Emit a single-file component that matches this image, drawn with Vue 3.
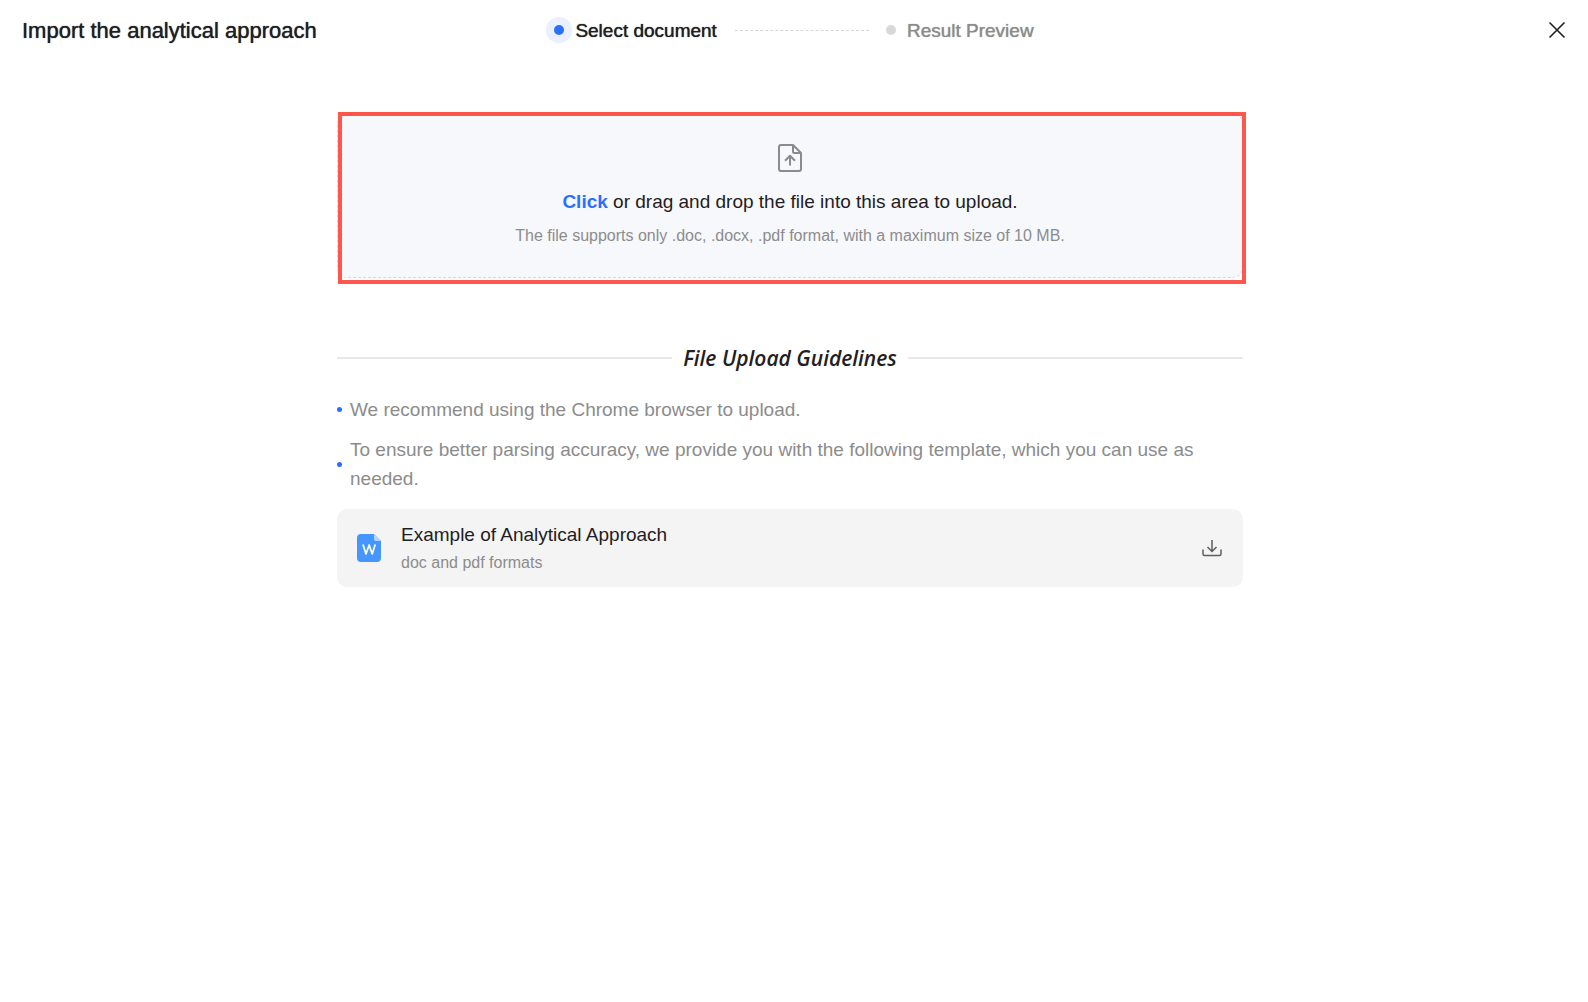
<script setup>
import { ref } from 'vue'

const emit = defineEmits(['close', 'upload', 'download'])

const current = ref(0)
const steps = ['Select document', 'Result Preview']

const tips = [
  'We recommend using the Chrome browser to upload.',
  'To ensure better parsing accuracy, we provide you with the following template, which you can use as needed.'
]

const onFiles = (files) => {
  if (!files || !files.length) return
  emit('upload', files[0])
}
</script>

<template>
  <div class="import-page">
    <header class="header">
      <h1 class="title">Import the analytical approach</h1>
      <ol class="steps">
        <li v-for="(step, index) in steps" :key="step" :class="['step', { active: index === current }]">
          <span class="step-dot"></span>
          <span class="step-text">{{ step }}</span>
        </li>
      </ol>
      <button class="close-btn" type="button" aria-label="Close" @click="emit('close')">
        <svg width="18" height="18" viewBox="0 0 18 18" fill="none" stroke="#1f2023" stroke-width="1.6">
          <path d="M1.5 1.5l15 15M16.5 1.5l-15 15" />
        </svg>
      </button>
    </header>

    <main class="content">
      <label class="dropzone" for="file-input" @dragover.prevent @drop.prevent="onFiles($event.dataTransfer.files)">
        <input id="file-input" class="file-input" type="file" accept=".doc,.docx,.pdf" @change="onFiles($event.target.files)" />
        <svg class="upload-icon" width="24" height="28" viewBox="0 0 24 28" fill="none" stroke="#8a8b8f" stroke-width="2" stroke-linejoin="round">
          <path d="M15 1H3a2 2 0 0 0-2 2v22a2 2 0 0 0 2 2h18a2 2 0 0 0 2-2V9z" />
          <path d="M15 1v6.5a1.5 1.5 0 0 0 1.5 1.5H23" />
          <path d="M12 21.5v-9M7 16.8l5-5 5 5" />
        </svg>
        <span class="drop-text"><b class="drop-link">Click</b> or drag and drop the file into this area to upload.</span>
        <span class="drop-hint">The file supports only .doc, .docx, .pdf format, with a maximum size of 10 MB.</span>
        <span class="highlight"></span>
      </label>

      <h2 class="guide-title"><span>File Upload Guidelines</span></h2>

      <ul class="tips">
        <li v-for="tip in tips" :key="tip" class="tip">{{ tip }}</li>
      </ul>

      <div class="template-card">
        <svg width="24" height="28" viewBox="0 0 24 28">
          <path d="M4 0h13l7 7v17a4 4 0 0 1-4 4H4a4 4 0 0 1-4-4V4a4 4 0 0 1 4-4z" fill="#4597ff" />
          <path d="M17 0l7 7h-5a2 2 0 0 1-2-2z" fill="#b5d6ff" />
          <path d="M6 10.5l3 9.5 3.2-9 3 9 3-9.500" fill="none" stroke="#fff" stroke-width="1.7" stroke-linejoin="round" />
        </svg>
        <div class="template-info">
          <div class="template-name">Example of Analytical Approach</div>
          <div class="template-desc">doc and pdf formats</div>
        </div>
        <button class="download-btn" type="button" aria-label="Download template" @click="emit('download')">
          <svg width="20" height="18" viewBox="0 0 20 18" fill="none" stroke="#5c5d60" stroke-width="1.5">
            <path d="M10 1v11.500M5.5 8l4.500 4.500L14.500 8" />
            <path d="M1 10.5V15a1.500 1.500 0 0 0 1.500 1.500h15A1.500 1.500 0 0 0 19 15v-4.500" />
          </svg>
        </button>
      </div>
    </main>
  </div>
</template>

<style>
body {
  margin: 0;
  background: #fff;
}
</style>

<style scoped>
.import-page {
  padding-right: 8px;
  font-family: "Liberation Sans", Arial, sans-serif;
  color: #1f2023;
}

.header {
  display: grid;
  grid-template-columns: 1fr auto 1fr;
  align-items: center;
  height: 60px;
  padding: 0 14px 0 22px;
}

.title {
  margin: 0;
  padding-top: 2px;
  font-size: 22px;
  line-height: 32px;
  font-weight: 400;
  text-shadow: 0 0 1px currentColor;
}

.steps {
  display: flex;
  align-items: center;
  margin: 0;
  padding: 0;
  list-style: none;
}

.step {
  display: flex;
  align-items: center;
  gap: 11px;
  font-size: 19px;
  line-height: 28px;
  color: #8c8c8c;
  text-shadow: 0 0 1px currentColor;
}

.step + .step::before {
  content: "";
  width: 134px;
  margin: 0 6px 0 18px;
  border-top: 1px dashed #d6d6d6;
}

.step-text {
  padding-top: 2px;
}

.step-dot {
  width: 10px;
  height: 10px;
  border-radius: 50%;
  background: #d9d9d9;
}

.step.active {
  color: #1f2023;
}

.step.active .step-dot {
  background: #2b6fff;
  box-shadow: 0 0 0 8px #eaf0ff;
}

.close-btn,
.download-btn {
  display: flex;
  padding: 0;
  border: none;
  background: none;
  cursor: pointer;
}

.close-btn {
  justify-self: end;
}

.content {
  max-width: 906px;
  margin: 0 auto;
  padding-top: 53px;
}

.dropzone {
  position: relative;
  display: flex;
  flex-direction: column;
  align-items: center;
  padding: 30px 16px 29px;
  border: 1px dashed #d5d8de;
  border-radius: 10px;
  background: #f7f8fc;
  cursor: pointer;
}

.file-input {
  position: absolute;
  width: 1px;
  height: 1px;
  opacity: 0;
}

.drop-text {
  margin-top: 16px;
  font-size: 19px;
  line-height: 28px;
}

.drop-link {
  color: #2b6fff;
}

.drop-hint {
  margin-top: 8px;
  font-size: 16px;
  line-height: 24px;
  color: #8c8c8c;
}

.highlight {
  position: absolute;
  inset: -2px -4px -7px 0;
  border: 4px solid #ff574d;
  pointer-events: none;
}

.guide-title {
  display: flex;
  align-items: center;
  gap: 11px;
  margin: 64px 0 0;
  font-family: "Open Sans", "Noto Sans", sans-serif;
  font-size: 21px;
  line-height: 32px;
  font-weight: 600;
  font-style: italic;
}

.guide-title::before,
.guide-title::after {
  content: "";
  flex: 1;
  height: 2px;
  background: #e8e8e8;
}

.tips {
  display: flex;
  flex-direction: column;
  gap: 11px;
  margin: 21px 0 16px;
  padding: 0;
  list-style: none;
}

.tip {
  display: flex;
  align-items: center;
  gap: 8px;
  font-size: 19px;
  line-height: 29px;
  color: #8c8c8c;
}

.tip::before {
  content: "";
  flex: none;
  width: 5px;
  height: 5px;
  border-radius: 50%;
  background: #2b6fff;
}

.template-card {
  display: flex;
  align-items: center;
  gap: 20px;
  padding: 11px 21px 11px 20px;
  border-radius: 10px;
  background: #f4f4f4;
}

.template-info {
  flex: 1;
}

.template-name {
  font-size: 19px;
  line-height: 29px;
}

.template-desc {
  font-size: 16px;
  line-height: 27px;
  color: #8c8c8c;
}
</style>
